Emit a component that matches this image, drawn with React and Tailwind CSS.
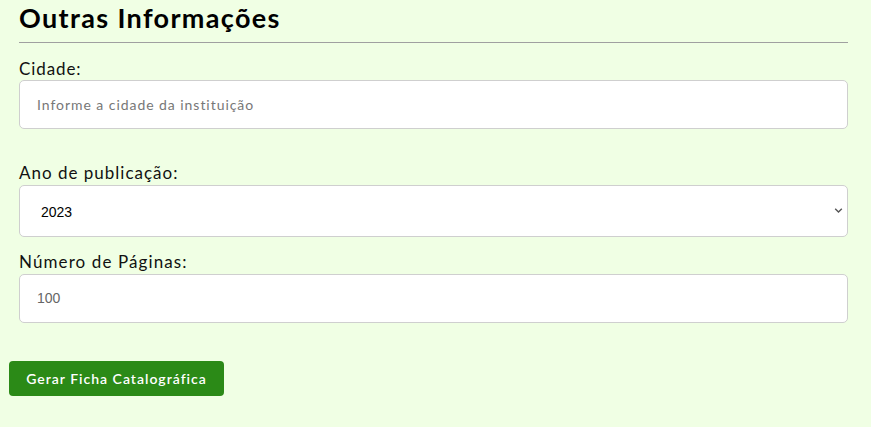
export default function App() {
  return (
    <div className="min-h-[427px] w-full bg-[#f0ffe4] pl-[9px] pr-[13px] font-['Lato',sans-serif]">
      <div className="px-[10px]">
        <h2 className="text-[27px] font-bold leading-[36px] text-black tracking-[1.35px]">Outras Informações</h2>
        <hr className="mt-[6px] border-0 border-t border-[#a0a0a0]" />
        <label className="mt-[16px] block text-[17px] leading-[20px] text-[#111] tracking-[0.9px]">Cidade:</label>
        <input
          className="mt-[1px] block h-[49px] w-full rounded-[5px] border border-[#cfcfcf] bg-white px-[17px] text-[14px] tracking-[0.95px] placeholder:text-[#777] outline-none"
          placeholder="Informe a cidade da instituição"
        />
        <label className="mt-[34px] block text-[17px] leading-[20px] text-[#111] tracking-[1px]">Ano de publicação:</label>
        <div className="relative mt-[2px] h-[52px] w-full rounded-[5px] border border-[#cfcfcf] bg-white">
          <span className="absolute left-[21px] top-[16px] text-[14px] text-black font-['Liberation_Sans',sans-serif]">2023</span>
          <svg className="absolute right-[4px] top-[21px]" width="9" height="7" viewBox="0 0 9 7">
            <path d="M1.2 1.8 L4.5 5 L7.8 1.8" fill="none" stroke="#555" strokeWidth="1.4" />
          </svg>
        </div>
        <label className="mt-[15px] block text-[17px] leading-[20px] text-[#111] tracking-[1.1px]">Número de Páginas:</label>
        <div className="mt-[2px] flex h-[49px] w-full items-center rounded-[5px] border border-[#cfcfcf] bg-white px-[17px]">
          <span className="text-[14px] text-[#666] font-['Liberation_Sans',sans-serif]">100</span>
        </div>
      </div>
      <button className="mt-[38px] h-[35px] w-[215px] rounded-[4px] bg-[#2b8a17] text-[14px] font-semibold text-white tracking-[1px]">
        Gerar Ficha Catalográfica
      </button>
    </div>
  );
}
